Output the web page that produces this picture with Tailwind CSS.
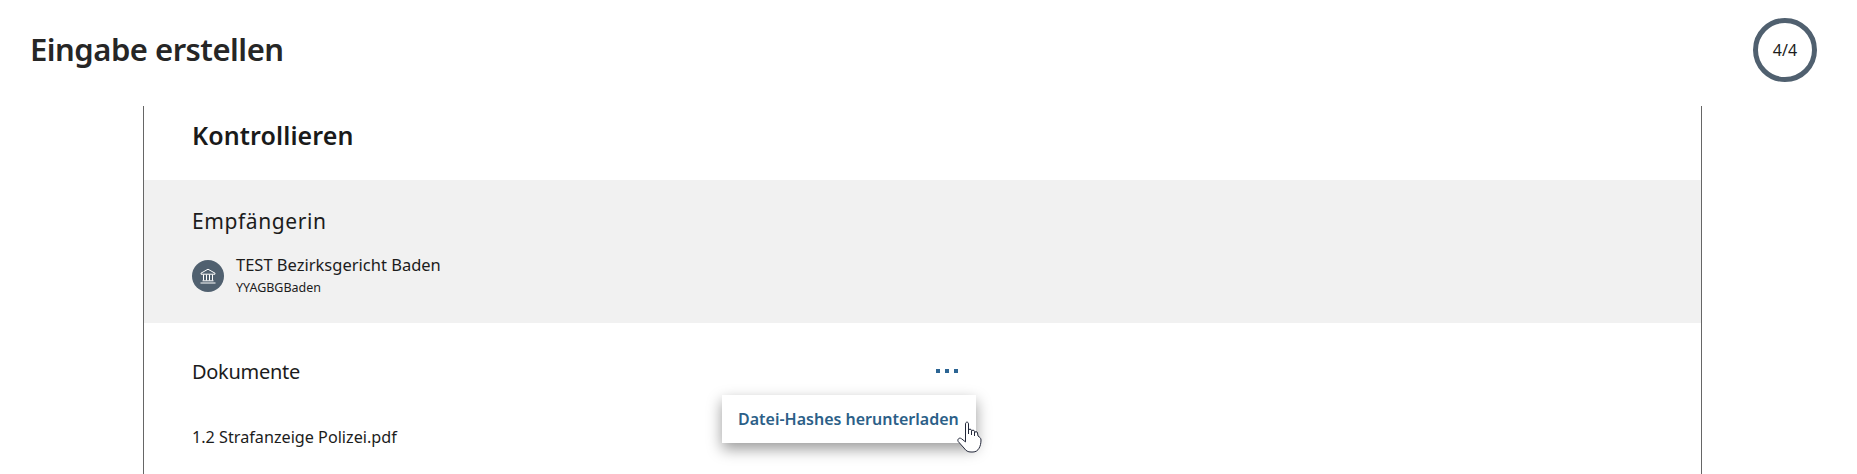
<!doctype html>
<html lang="de"><head><meta charset="utf-8"><script src="https://cdn.jsdelivr.net/npm/@tailwindcss/browser@4"></script></head>
<body class="bg-white overflow-hidden">
<div class="h-[474px] w-[1857px] overflow-hidden font-['Noto_Sans',sans-serif] text-[#1c1c1c] relative">
  <header class="h-[106px] flex items-center justify-between pl-[30px] pr-[40px]">
    <h1 class="text-[31px] font-semibold leading-[40px] tracking-[-0.5px] -mt-[9px] text-[#262626]">Eingabe erstellen</h1>
    <div class="w-[64px] h-[64px] rounded-full border-[5px] border-[#50606f] flex items-center justify-center text-[16px] -mt-[6px]">4/4</div>
  </header>
  <main class="mx-[143px] w-[1559px] h-[368px] border-x border-[#666666]">
    <div class="h-[74px] pl-[48px] pt-[7px]"><h2 class="text-[25px] font-semibold leading-[44px] tracking-[0.1px] text-[#1a1a1a]">Kontrollieren</h2></div>
    <section class="h-[143px] bg-[#f1f1f1] pl-[48px] pt-[26px]">
      <h3 class="text-[21px] leading-[30px] tracking-[0.6px]">Empfängerin</h3>
      <div class="flex items-center gap-[12px] mt-[18px]">
        <span class="w-[32px] h-[32px] rounded-full bg-[#50606f] flex items-center justify-center">
          <svg class="w-[18px] h-[18px]" viewBox="0 0 18 18" fill="none" stroke="#fff" stroke-width="1"><path d="M2 6.200 9 2.200l7 4v1H2z"/><path d="M4.500 7.500v6M7.500 7.500v6M10.500 7.500v6M13.500 7.500v6M3.500 13.800h11M1.500 16h15"/></svg>
        </span>
        <div>
          <div class="text-[16.5px] leading-[22px]">TEST Bezirksgericht Baden</div>
          <div class="text-[12.5px] leading-[18px] mt-[3px]">YYAGBGBaden</div>
        </div>
      </div>
    </section>
    <section class="pl-[48px] relative">
      <h3 class="text-[20px] leading-[30px] tracking-[-0.3px] pt-[34px] h-[64px]">Dokumente</h3>
      <p class="text-[16.200px] leading-[24px] mt-[38px]">1.2 Strafanzeige Polizei.pdf</p>
      <div class="absolute left-[792px] top-[46px] flex gap-[5px]">
        <span class="w-[4px] h-[4px] bg-[#2c6594]"></span><span class="w-[4px] h-[4px] bg-[#2c6594]"></span><span class="w-[4px] h-[4px] bg-[#2c6594]"></span>
      </div>
      <div class="absolute left-[578px] top-[72px] w-[254px] h-[48px] bg-white flex items-center pl-[16px] text-[16px] font-semibold text-[#2c5f88] shadow-[0_6px_14px_rgba(0,0,0,0.4)] whitespace-nowrap">Datei-Hashes herunterladen</div>
      <svg class="absolute left-[813px] top-[98px]" width="26" height="33" viewBox="0 0 26 33" fill="#fff" stroke="#23283a" stroke-width="1" stroke-linejoin="round" stroke-linecap="round"><path d="M8.500 20.500V3c0-2.500 3-2.500 3 0v10V9.500c0-1.800 3-1.800 3 0V14v-3.500c0-1.800 3-1.800 3 0V15v-3c0-1.800 3-1.800 3 0l.5 3c1.500 1 3 2 3 4 0 6-2.500 12-8 12h-2c-3 0-5-1-7-4L1.200 20.500c-1.200-2 1-4.500 3-3z"/></svg>
    </section>
  </main>
</div>
</body></html>
